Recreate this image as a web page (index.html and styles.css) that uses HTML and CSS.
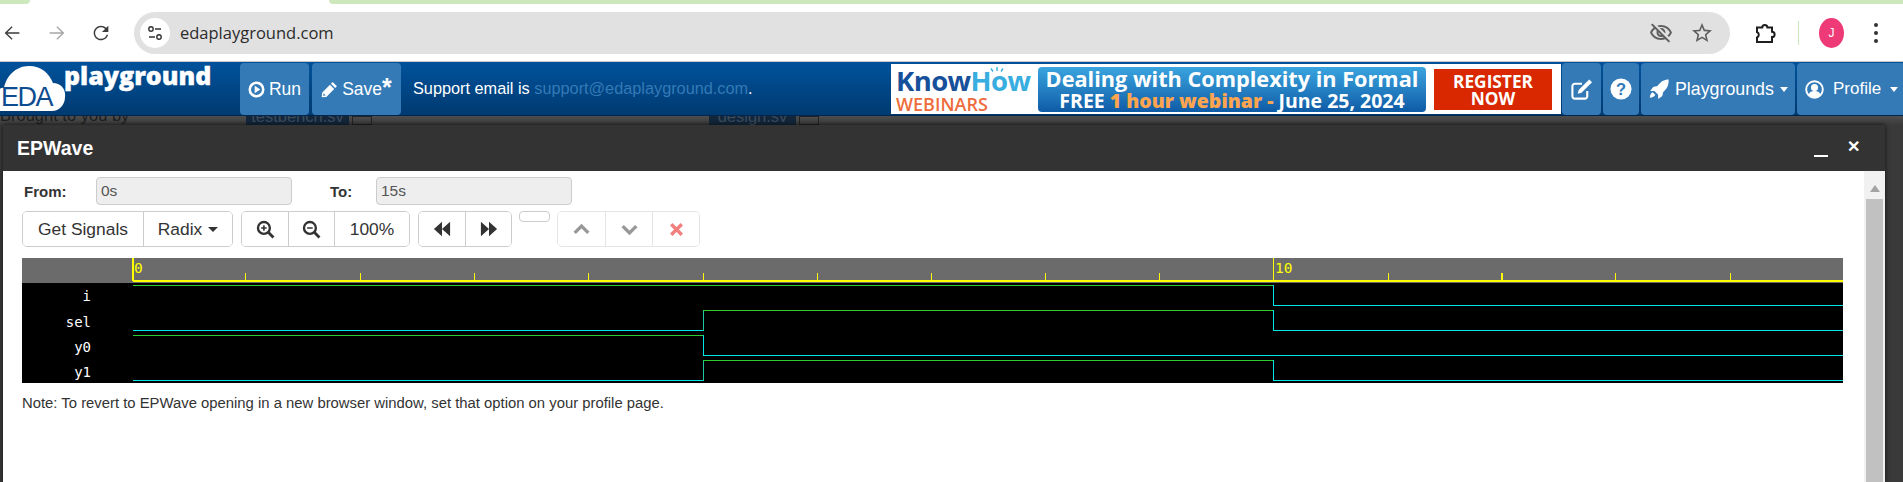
FILE: index.html
```html
<!DOCTYPE html>
<html lang="en">
<head>
    <meta charset="UTF-8">
    <title>EPWave</title>
    <link rel="stylesheet" href="styles.css">
</head>
<body>

    <div class="tabstrip">
        <div class="tab-green tab-left"></div>
        <div class="tab-active"></div>
        <div class="tab-green tab-right"></div>
    </div>

    <div class="toolbar">
        <svg class="tb-icon back" viewBox="0 0 24 24"><path d="M20 11.2H7l5.6-5.6-1-1L4 12l7.600 7.400 1-1L7 12.800h13z"/></svg>
        <svg class="tb-icon forward" viewBox="0 0 24 24"><path d="M4 11.200h13l-5.600-5.600 1-1L20 12l-7.600 7.400-1-1 5.600-5.600H4z"/></svg>
        <svg class="tb-icon reload" viewBox="0 0 24 24"><path d="M17.65 6.35A7.958 7.958 0 0 0 12 4c-4.42 0-7.99 3.58-7.99 8s3.57 8 7.99 8c3.73 0 6.84-2.55 7.73-6h-1.6A6.4 6.4 0 0 1 12 18.4c-3.5 0-6.4-2.9-6.4-6.4s2.9-6.4 6.4-6.4c1.77 0 3.3.73 4.44 1.9L13 11h7V4z"/></svg>
        <div class="omnibox">
            <span class="site-info">
                <svg viewBox="0 0 20 20" width="20" height="20"><circle cx="6" cy="6" r="2.2" fill="none" stroke="#333" stroke-width="1.4"/><path d="M10 6h6M4 14h6" stroke="#333" stroke-width="1.5"/><circle cx="14" cy="14" r="2.2" fill="none" stroke="#333" stroke-width="1.4"/></svg>
            </span>
            <span class="url">edaplayground.com</span>
            <svg class="omni-icon eye" viewBox="0 0 24 24"><path d="M12 6c3.79 0 7.17 2.13 8.82 5.5-.59 1.22-1.42 2.27-2.41 3.12l1.41 1.41c1.39-1.23 2.49-2.77 3.18-4.53C21.27 7.11 17 4 12 4c-1.27 0-2.49.2-3.64.57l1.65 1.65C10.66 6.09 11.32 6 12 6zm-1.07 1.14L13 9.21c.57.25 1.03.71 1.28 1.28l2.07 2.07c.08-.34.14-.7.14-1.07C16.5 9.01 14.48 7 12 7c-.37 0-.72.05-1.07.14zM2.01 3.87l2.68 2.68A11.738 11.738 0 0 0 1 11.5C2.73 15.89 7 19 12 19c1.52 0 2.98-.29 4.32-.82l3.42 3.42 1.41-1.41L3.42 2.45 2.01 3.87zm7.5 7.5l2.61 2.61c-.04.01-.08.02-.12.02-1.38 0-2.5-1.12-2.5-2.5 0-.05.01-.08.01-.13zm-3.4-3.4l1.75 1.75c-.23.55-.36 1.15-.36 1.78 0 2.48 2.02 4.5 4.5 4.5.63 0 1.23-.13 1.77-.36l.98.98c-.88.24-1.8.38-2.75.38-3.79 0-7.17-2.13-8.82-5.5.7-1.43 1.72-2.61 2.93-3.53z"/></svg>
            <svg class="omni-icon star" viewBox="0 0 24 24"><path d="M22 9.24l-7.19-.62L12 2 9.19 8.63 2 9.24l5.46 4.73L5.82 21 12 17.27 18.18 21l-1.63-7.03L22 9.24zM12 15.4l-3.76 2.27 1-4.28-3.32-2.88 4.38-.38L12 6.1l1.71 4.04 4.38.38-3.32 2.88 1 4.28L12 15.4z"/></svg>
        </div>
        <svg class="tb-icon puzzle" viewBox="0 0 24 24"><path d="M4 6.500h5.200a2.600 2.600 0 0 1 5.200 0H19v4.300a2.600 2.600 0 0 1 0 5.200V21H4v-4.500a3 3 0 0 0 0-5.500z"/></svg>
        <span class="tb-sep"></span>
        <span class="avatar">J</span>
        <span class="kebab"><i></i><i></i><i></i></span>
    </div>

    <nav class="navbar">
        <svg class="logo" viewBox="0 0 232 54" width="232" height="54">
            <path class="cloud" d="M-4 48c-6 0-6-12 0-16 0-4 5-8 8-7C6 14 15 3 29 3c12 0 20 7 24 17 8 0 13 6 12 14 0 8-6 14-13 14z"/>
            <text class="logo-eda" x="1" y="43">EDA</text>
            <text class="logo-play" x="64" y="22">playground</text>
        </svg>
        <a class="nav-btn run">
            <svg class="fa" viewBox="0 0 24 24" width="17" height="17"><circle cx="12" cy="12" r="9.5" fill="none" stroke="#fff" stroke-width="3.6"/><path d="M9.4 6.8v10.4l8-5.2z" fill="#fff"/></svg>
            Run
        </a>
        <a class="nav-btn save">
            <svg class="fa" viewBox="0 0 24 24" width="17" height="17"><path d="M16.5 1.5l6 6L20 10l-6-6zM12.6 5.4l6 6L7.5 22.5 1 23l.5-6.5zM3.6 17.4l-.5 3.5 3.5-.5z" fill="#fff" fill-rule="evenodd"/></svg>
            Save<span class="star-mark">*</span>
        </a>
        <div class="support">Support email is <a>support@edaplayground.com</a>.</div>

        <div class="banner">
            <div class="banner-brand">
                <div class="brand-top">
                    <span class="know">Know</span><span class="how">How</span>
                    <svg class="bulb-rays" viewBox="0 0 18 8" width="18" height="8"><path d="M9 0v4M3 1.500l2 3M15 1.500l-2 3" stroke="#38aee0" stroke-width="1.400"/></svg>
                </div>
                <div class="brand-sub">WEBINARS</div>
            </div>
            <div class="banner-pill">
                <div class="pill-one">Dealing with Complexity in Formal</div>
                <div class="pill-two">FREE <b>1 hour webinar -</b> June 25, 2024</div>
            </div>
            <div class="banner-cta">REGISTER<br>NOW</div>
        </div>

        <a class="nav-btn square">
            <svg class="fa" viewBox="0 0 24 24" width="23" height="23"><path d="M18 13.5V19a2.5 2.5 0 0 1-2.5 2.5H5A2.5 2.5 0 0 1 2.5 19V8.500A2.500 2.500 0 0 1 5 6h7.500" fill="none" stroke="#fff" stroke-width="2.200"/><path d="M20 1.500l3 3-11 11-4 1 1-4z" fill="#fff"/></svg>
        </a>
        <a class="nav-btn help">
            <svg class="fa" viewBox="0 0 24 24" width="22" height="22"><circle cx="12" cy="12" r="11.500" fill="#fff"/><text class="help-mark" x="12" y="18">?</text></svg>
        </a>
        <a class="nav-btn drop playgrounds">
            <svg class="fa" viewBox="0 0 24 24" width="20" height="20"><path d="M23.500.5c.5 6-1.500 11-6.500 15l-1 5-5 3.500v-5L6.500 14.500H1.500L5 9.500l5-1C14 3 18 .5 23.500.5zM4.500 16c-1.500.5-3 2-3.500 6.500C5.500 22 7 20.500 7.500 19z" fill="#fff"/></svg>
            Playgrounds<span class="caret"></span>
        </a>
        <a class="nav-btn drop profile">
            <svg class="fa" viewBox="0 0 24 24" width="19" height="19"><circle cx="12" cy="12" r="10.500" fill="none" stroke="#fff" stroke-width="2.400"/><circle cx="12" cy="9.500" r="4.500" fill="#fff"/><path d="M4.500 19c1-4 4-5 7.500-5s6.500 1 7.500 5c-2 2-4.500 3.500-7.500 3.500S6.500 21 4.500 19z" fill="#fff"/></svg>
            Profile<span class="caret"></span>
        </a>
    </nav>

    <div class="backdrop">
        <div class="behind">
            <span class="brought">Brought to you by</span>
            <span class="tab-dim testbench">testbench.sv</span>
            <span class="plus-dim plus-a"></span>
            <span class="tab-dim design">design.sv</span>
            <span class="plus-dim plus-b"></span>
        </div>

        <div class="modal">
            <div class="modal-title">
                <span class="title-text">EPWave</span>
                <span class="title-min"></span>
                <span class="title-close">&#10005;</span>
            </div>
            <div class="modal-body">
                <div class="pane">
                    <div class="range-row">
                        <label class="range-label from">From:</label>
                        <input class="range-input" type="text" value="0s" disabled>
                        <label class="range-label to">To:</label>
                        <input class="range-input" type="text" value="15s" disabled>
                    </div>

                    <div class="btn-row">
                        <div class="btn-group">
                            <button class="btn signals">Get Signals</button>
                            <button class="btn radix">Radix<span class="caret dark"></span></button>
                        </div>
                        <div class="btn-group">
                            <button class="btn ico">
                                <svg viewBox="0 0 24 24" width="19" height="19"><circle cx="10" cy="10" r="7.500" fill="none" stroke="#333" stroke-width="3"/><path d="M15.500 15.500L22 22" stroke="#333" stroke-width="3.600"/><path d="M6.500 10h7M10 6.500v7" stroke="#333" stroke-width="2"/></svg>
                            </button>
                            <button class="btn ico">
                                <svg viewBox="0 0 24 24" width="19" height="19"><circle cx="10" cy="10" r="7.500" fill="none" stroke="#333" stroke-width="3"/><path d="M15.500 15.500L22 22" stroke="#333" stroke-width="3.600"/><path d="M6.500 10h7" stroke="#333" stroke-width="2"/></svg>
                            </button>
                            <button class="btn percent">100%</button>
                        </div>
                        <div class="btn-group">
                            <button class="btn ico">
                                <svg viewBox="0 0 20 20" width="18" height="18"><path d="M10 2v16L1 10zM19 2v16l-9-8z" fill="#333"/></svg>
                            </button>
                            <button class="btn ico">
                                <svg viewBox="0 0 20 20" width="18" height="18"><path d="M1 2v16l9-8zM10 2v16l9-8z" fill="#333"/></svg>
                            </button>
                        </div>
                        <div class="btn-empty"></div>
                        <div class="btn-group faded">
                            <button class="btn ico small">
                                <svg viewBox="0 0 20 20" width="17" height="17"><path d="M2 14l8-8 8 8" fill="none" stroke="#333" stroke-width="4"/></svg>
                            </button>
                            <button class="btn ico small">
                                <svg viewBox="0 0 20 20" width="17" height="17"><path d="M2 6l8 8 8-8" fill="none" stroke="#333" stroke-width="4"/></svg>
                            </button>
                            <button class="btn ico small">
                                <svg viewBox="0 0 20 20" width="15" height="15"><path d="M3 3l14 14M17 3L3 17" stroke="#e60000" stroke-width="4.500"/></svg>
                            </button>
                        </div>
                    </div>

                    <svg class="wave" viewBox="22 258 1821 125" width="1821" height="125">
                        <rect class="ruler" x="22" y="258" width="1821" height="25"/>
                        <rect x="22" y="283" width="1821" height="100" fill="#000"/>
                        <g class="marks">
                            <rect x="133" y="280" width="1710" height="2"/>
                            <rect x="132" y="258" width="2" height="23"/>
                            <rect x="1273" y="258" width="1" height="23"/>
                            <rect x="245" y="273" width="1" height="8"/>
                            <rect x="360" y="273" width="1" height="8"/>
                            <rect x="474" y="273" width="1" height="8"/>
                            <rect x="588" y="273" width="1" height="8"/>
                            <rect x="703" y="273" width="1" height="8"/>
                            <rect x="817" y="273" width="1" height="8"/>
                            <rect x="931" y="273" width="1" height="8"/>
                            <rect x="1045" y="273" width="1" height="8"/>
                            <rect x="1159" y="273" width="1" height="8"/>
                            <rect x="1388" y="273" width="1" height="8"/>
                            <rect x="1501" y="273" width="2" height="8"/>
                            <rect x="1615" y="273" width="1" height="8"/>
                            <rect x="1730" y="273" width="1" height="8"/>
                        </g>
                        <text class="tick-text" x="134" y="273">0</text>
                        <text class="tick-text" x="1275" y="273">10</text>

                        <text class="sig-name" x="91" y="301">i</text>
                        <text class="sig-name" x="91" y="327">sel</text>
                        <text class="sig-name" x="91" y="352">y0</text>
                        <text class="sig-name" x="91" y="377">y1</text>

                        <!-- i -->
                        <path class="hi" d="M133 285.500H1273"/>
                        <path class="lo" d="M1273.500 285V305.500H1843"/>
                        <!-- sel -->
                        <path class="lo" d="M133 330.500H703"/>
                        <path class="edge" d="M703.500 331V310"/>
                        <path class="hi" d="M703 310.500H1273"/>
                        <path class="lo" d="M1273.500 310V330.500H1843"/>
                        <!-- y0 -->
                        <path class="hi" d="M133 335.500H703"/>
                        <path class="lo" d="M703.500 335V355.500H1843"/>
                        <!-- y1 -->
                        <path class="lo" d="M133 380.500H703"/>
                        <path class="edge" d="M703.500 381V360"/>
                        <path class="hi" d="M703 360.500H1273"/>
                        <path class="lo" d="M1273.500 360V380.500H1843"/>
                    </svg>

                    <p class="note">Note: To revert to EPWave opening in a new browser window, set that option on your profile page.</p>
                </div>
                <div class="scrollbar">
                    <span class="scroll-up"></span>
                    <span class="scroll-thumb"></span>
                </div>
            </div>
        </div>
    </div>

</body>
</html>
```

FILE: styles.css
```css
html, body {
    margin: 0;
    height: 482px;
    overflow: hidden;
}
body {
    font-family: "Liberation Sans", Arial, sans-serif;
    font-size: 15px;
    color: #333;
    background: #3a3a3a;
    display: flex;
    flex-direction: column;
    width: 1903px;
}

/* browser chrome */
.tabstrip {
    height: 4px;
    display: flex;
    background: #fff;
    flex-shrink: 0;
}
.tab-green {
    background: #cde8bc;
}
.tab-left {
    width: 30px;
    border-bottom-right-radius: 4px;
}
.tab-active {
    width: 299px;
}
.tab-right {
    flex: 1;
    border-bottom-left-radius: 4px;
}
.toolbar {
    height: 58px;
    background: #fff;
    display: flex;
    align-items: center;
    flex-shrink: 0;
    box-sizing: border-box;
    border-bottom: 1px solid #c8c8c8;
}
.tb-icon {
    width: 22px;
    height: 22px;
    fill: #3b3b3b;
    flex-shrink: 0;
}
.back {
    margin-left: 1px;
}
.forward {
    margin-left: 23px;
    fill: #a6a6a6;
}
.reload {
    margin-left: 22px;
}
.omnibox {
    margin-left: 22px;
    width: 1596px;
    height: 42px;
    border-radius: 21px;
    background: #e1e1e1;
    display: flex;
    align-items: center;
    flex-shrink: 0;
}
.site-info {
    width: 30px;
    height: 30px;
    margin-left: 6px;
    border-radius: 50%;
    background: #fff;
    display: flex;
    align-items: center;
    justify-content: center;
}
.url {
    margin-left: 10px;
    font-family: "Open Sans", sans-serif;
    font-size: 16.500px;
    color: #2b2b2b;
}
.omni-icon {
    width: 24px;
    height: 24px;
    fill: #5f5f5f;
}
.eye {
    margin-left: auto;
}
.star {
    margin-left: 17px;
    margin-right: 16px;
}
.puzzle {
    margin-left: 23px;
    width: 24px;
    height: 24px;
    fill: none;
    stroke: #1f1f1f;
    stroke-width: 2;
}
.tb-sep {
    width: 1px;
    height: 24px;
    margin-left: 21px;
    background: #cde8bc;
}
.avatar {
    width: 25px;
    height: 30px;
    margin-left: 20px;
    border-radius: 50%;
    background: #ee3a77;
    color: #fff;
    font-size: 12px;
    text-align: center;
    line-height: 30px;
}
.kebab {
    margin-left: 30px;
    display: flex;
    flex-direction: column;
    gap: 4px;
}
.kebab i {
    width: 4px;
    height: 4px;
    border-radius: 50%;
    background: #333;
}

/* site navbar */
.navbar {
    height: 54px;
    flex-shrink: 0;
    display: flex;
    background: linear-gradient(#00529c, #003a70);
    border-bottom: 1px solid #00264d;
    box-sizing: border-box;
    padding-top: 1px;
    color: #fff;
    overflow: hidden;
}
.logo {
    width: 232px;
    margin-right: 8px;
    flex-shrink: 0;
}
.cloud {
    fill: #fff;
}
.logo-eda {
    font-family: "Liberation Sans", sans-serif;
    font-size: 27px;
    letter-spacing: -1.500px;
    fill: #0d4d8f;
}
.logo-play {
    font-family: "Open Sans", sans-serif;
    font-weight: 800;
    font-size: 25px;
    fill: #fff;
    stroke: #fff;
    stroke-width: .4px;
}
.nav-btn {
    background: #337ab7;
    border-radius: 4px;
    display: flex;
    align-items: center;
    justify-content: center;
    gap: 4px;
    font-size: 17.500px;
    height: 52px;
    flex-shrink: 0;
}
.fa {
    flex-shrink: 0;
}
.run {
    width: 69px;
}
.save {
    width: 89px;
    margin-left: 3px;
}
.star-mark {
    font-size: 25px;
    font-weight: bold;
    line-height: 16px;
    align-self: flex-start;
    margin: 16px 0 0 -4px;
    height: 20px;
}
.support {
    margin-left: 12px;
    font-size: 16.300px;
    line-height: 50px;
    width: 478px;
    flex-shrink: 0;
}
.support a {
    color: #337ab7;
}
.banner {
    width: 670px;
    height: 50px;
    margin-top: 1px;
    background: #fff;
    display: flex;
    align-items: center;
    flex-shrink: 0;
}
.banner-brand {
    width: 147px;
    padding-left: 5px;
    box-sizing: border-box;
    font-family: "Open Sans", sans-serif;
    font-weight: 700;
}
.brand-top {
    font-size: 27.500px;
    line-height: 29px;
    letter-spacing: -.6px;
    position: relative;
}
.bulb-rays {
    position: absolute;
    left: 92px;
    top: 1px;
}
.know {
    color: #17509a;
}
.how {
    color: #38aee0;
}
.brand-sub {
    font-size: 18px;
    line-height: 18px;
    color: #ee6c3c;
    font-weight: 600;
}
.banner-pill {
    width: 388px;
    height: 45px;
    border-radius: 4px;
    background: linear-gradient(#3aa5df, #0f5ba6);
    color: #fff;
    text-align: center;
    font-family: "Open Sans", sans-serif;
    font-weight: 700;
}
.pill-one {
    font-size: 21.700px;
    line-height: 24px;
}
.pill-two {
    font-size: 19.500px;
    line-height: 20px;
}
.pill-two b {
    color: #ffa54f;
}
.banner-cta {
    width: 118px;
    height: 41px;
    margin-left: 8px;
    background: #d92800;
    color: #fff;
    text-align: center;
    font-family: "Open Sans", sans-serif;
    font-weight: 700;
    font-size: 17.300px;
    line-height: 17px;
    padding-top: 4px;
    box-sizing: border-box;
}
.square {
    width: 39px;
    margin-left: 1px;
}
.help {
    width: 36px;
    margin-left: 2px;
}
.help-mark {
    font-size: 18px;
    font-weight: bold;
    fill: #337ab7;
    text-anchor: middle;
}
.drop {
    justify-content: flex-start;
    padding-left: 8px;
    box-sizing: border-box;
    gap: 6px;
}
.playgrounds {
    width: 154px;
    margin-left: 2px;
    font-size: 17.800px;
}
.profile {
    width: 108px;
    margin-left: 2px;
    gap: 9px;
    font-size: 17px;
}
.caret {
    display: inline-block;
    margin-left: 6px;
    border-top: 5px solid #fff;
    border-left: 5px solid transparent;
    border-right: 5px solid transparent;
    vertical-align: middle;
}
.drop .caret {
    margin-left: 0;
    border-left-width: 4px;
    border-right-width: 4px;
}
.caret.dark {
    border-top-color: #333;
}

/* dimmed page with the dialog over it */
.backdrop {
    flex: 1;
    min-height: 0;
    background: #3a3a3a;
    display: flex;
    flex-direction: column;
}
.behind {
    height: 9px;
    flex-shrink: 0;
    display: flex;
    background: linear-gradient(#4e4e4e, #3a3a3a);
    overflow: hidden;
    font-size: 16.500px;
    color: #1e1e1e;
    line-height: 20px;
}
.brought {
    width: 246px;
    margin-top: -11px;
    flex-shrink: 0;
}
.tab-dim {
    background: #13263a;
    color: #3c4c5c;
    text-align: center;
    margin-top: -11px;
    padding-top: 11px;
    height: 20px;
    line-height: 0;
    flex-shrink: 0;
}
.testbench {
    width: 103px;
}
.design {
    width: 87px;
    margin-left: 337px;
}
.plus-dim {
    width: 20px;
    border: 1px solid #222;
    flex-shrink: 0;
    margin-left: 3px;
    box-sizing: border-box;
}
.modal {
    flex: 1;
    min-height: 0;
    width: 1882px;
    margin-left: 3px;
    background: #333;
    display: flex;
    flex-direction: column;
    box-shadow: 0 0 5px rgba(0,0,0,.7);
}
.modal-title {
    height: 46px;
    flex-shrink: 0;
    display: flex;
    align-items: center;
    color: #fff;
}
.title-text {
    margin-left: 14px;
    font-size: 19.500px;
    font-weight: bold;
}
.title-min {
    width: 14px;
    height: 2px;
    margin-left: auto;
    margin-top: 16px;
    background: #fff;
}
.title-close {
    margin: -4px 25px 0 19px;
    font-size: 16px;
    font-weight: bold;
}
.modal-body {
    flex: 1;
    min-height: 0;
    background: #fff;
    display: flex;
}
.pane {
    flex: 1;
    padding: 6px 0 0 19px;
    min-width: 0;
}
.range-row {
    display: flex;
    align-items: center;
    height: 28px;
}
.range-label {
    font-size: 15px;
    font-weight: bold;
    color: #333;
}
.from {
    margin-left: 2px;
    width: 72px;
}
.to {
    width: 46px;
    margin-left: 38px;
}
.range-input {
    width: 196px;
    height: 28px;
    box-sizing: border-box;
    background: #eee;
    border: 1px solid #ccc;
    border-radius: 4px;
    padding: 0 4px;
    font-family: inherit;
    font-size: 15.500px;
    color: #555;
}
.btn-row {
    display: flex;
    margin-top: 6px;
    align-items: flex-start;
    gap: 8px;
}
.btn-group {
    display: flex;
    height: 36px;
    border: 1px solid #ccc;
    border-radius: 5px;
    box-sizing: border-box;
    overflow: hidden;
}
.btn {
    height: 100%;
    border: none;
    background: #fff;
    border-left: 1px solid #ccc;
    font-family: inherit;
    font-size: 17.400px;
    color: #333;
    padding: 0;
    display: flex;
    align-items: center;
    justify-content: center;
}
.btn:first-child {
    border-left: none;
}
.signals {
    width: 120px;
}
.radix {
    width: 89px;
}
.ico {
    width: 46px;
}
.percent {
    width: 75px;
}
.ico.small {
    width: 47px;
}
.btn-empty {
    width: 31px;
    height: 11px;
    border: 1px solid #ccc;
    border-radius: 4px;
    box-sizing: border-box;
    margin: 0 -1px;
}
.faded {
    opacity: .5;
}
.wave {
    display: block;
    margin: 11px 0 0 0;
}
.ruler {
    fill: #6b6b6b;
}
.marks rect {
    fill: #ffff00;
}
.tick-text {
    font-family: "DejaVu Sans Mono", monospace;
    font-size: 14.500px;
    fill: #ffff00;
}
.sig-name {
    font-family: "DejaVu Sans Mono", monospace;
    font-size: 14px;
    fill: #fff;
    text-anchor: end;
}
.hi, .lo, .edge {
    fill: none;
    stroke-width: 1;
    shape-rendering: crispEdges;
}
.hi {
    stroke: #2ecc2e;
}
.lo {
    stroke: #00e5e5;
}
.edge {
    stroke: #1fc9a0;
}
.note {
    margin: 11px 0 0 0;
    font-size: 14.850px;
    line-height: 18px;
    color: #333;
}
.scrollbar {
    width: 21px;
    flex-shrink: 0;
    background: #f1f1f1;
    display: flex;
    flex-direction: column;
    align-items: center;
}
.scroll-up {
    margin-top: 14px;
    border-bottom: 7px solid #a3a3a3;
    border-left: 5px solid transparent;
    border-right: 5px solid transparent;
}
.scroll-thumb {
    flex: 1;
    width: 17px;
    margin-top: 7px;
    background: #c1c1c1;
}
```
